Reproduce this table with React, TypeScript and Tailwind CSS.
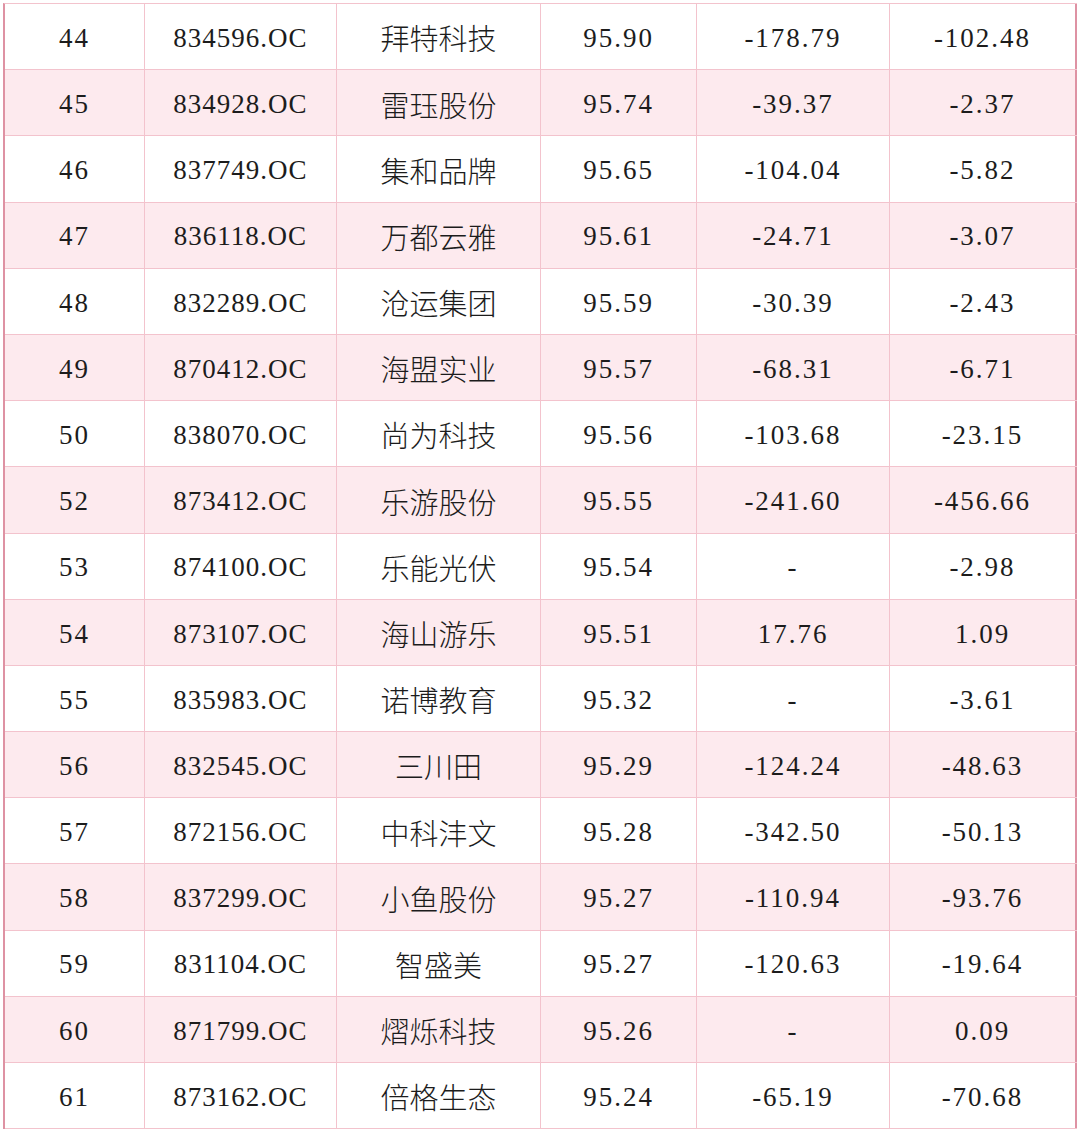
import React from 'react';

type Row = [string, string, string, string, string, string];

const rows: Row[] = [
  ['44', '834596.OC', '拜特科技', '95.90', '-178.79', '-102.48'],
  ['45', '834928.OC', '雷珏股份', '95.74', '-39.37', '-2.37'],
  ['46', '837749.OC', '集和品牌', '95.65', '-104.04', '-5.82'],
  ['47', '836118.OC', '万都云雅', '95.61', '-24.71', '-3.07'],
  ['48', '832289.OC', '沧运集团', '95.59', '-30.39', '-2.43'],
  ['49', '870412.OC', '海盟实业', '95.57', '-68.31', '-6.71'],
  ['50', '838070.OC', '尚为科技', '95.56', '-103.68', '-23.15'],
  ['52', '873412.OC', '乐游股份', '95.55', '-241.60', '-456.66'],
  ['53', '874100.OC', '乐能光伏', '95.54', '-', '-2.98'],
  ['54', '873107.OC', '海山游乐', '95.51', '17.76', '1.09'],
  ['55', '835983.OC', '诺博教育', '95.32', '-', '-3.61'],
  ['56', '832545.OC', '三川田', '95.29', '-124.24', '-48.63'],
  ['57', '872156.OC', '中科沣文', '95.28', '-342.50', '-50.13'],
  ['58', '837299.OC', '小鱼股份', '95.27', '-110.94', '-93.76'],
  ['59', '831104.OC', '智盛美', '95.27', '-120.63', '-19.64'],
  ['60', '871799.OC', '熠烁科技', '95.26', '-', '0.09'],
  ['61', '873162.OC', '倍格生态', '95.24', '-65.19', '-70.68'],
];

const Cell = ({ text, col }: { text: string; col: number }) => {
  const edge = col === 5 ? 'border-r-2 border-[#de92a3]' : 'border-r border-[#f3c3cd]';
  if (col === 2) {
    return (
      <div className={`flex items-center justify-center pt-[3px] ${edge}`}>
        <span className="font-['Noto_Sans_CJK_SC'] text-[29px] font-light">{text}</span>
      </div>
    );
  }
  if (col === 1) {
    return (
      <div className={`flex items-center justify-center pt-[3px] ${edge}`}>
        <span className="font-['Liberation_Serif'] text-[27px] tracking-[1px]">{text}</span>
      </div>
    );
  }
  return (
    <div className={`flex items-center justify-center pt-[3px] ${edge}`}>
      <span className="font-['Liberation_Serif'] text-[27px] tracking-[2px]">{text}</span>
    </div>
  );
};

const App = () => {
  return (
    <div className="min-h-screen bg-white pt-[3px] pl-[3px]">
      <div className="w-[1074px] border-l-2 border-t border-l-[#de92a3] border-t-[#f3c3cd] text-[#1c1c1c]">
        {rows.map((r, i) => (
          <div
            key={r[0]}
            className={`grid h-[66.2px] grid-cols-[140px_192px_204px_156px_193px_187px] border-b border-[#f3c3cd] ${
              i % 2 === 1 ? 'bg-[#fdeaee]' : 'bg-white'
            }`}
          >
            {r.map((cell, j) => (
              <Cell key={j} text={cell} col={j} />
            ))}
          </div>
        ))}
      </div>
    </div>
  );
};

export default App;
